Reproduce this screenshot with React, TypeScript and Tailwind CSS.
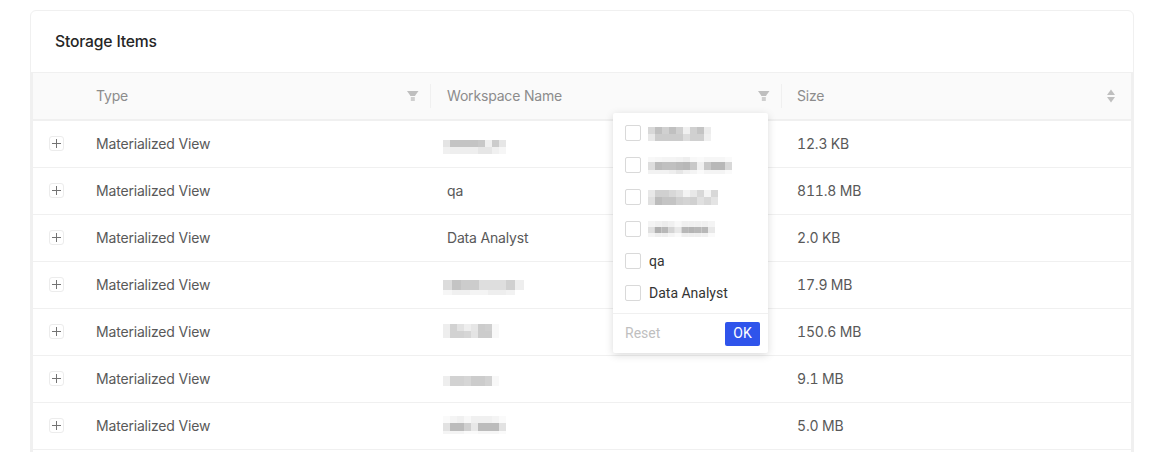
type Band = { y: number; h: number; cells: string[] };
type Blur = { cell: number; bands: Band[] };

const rows: { size: string; ws?: string; blur?: Blur }[] = [
  {
    size: "12.3 KB",
    blur: {
      cell: 7,
      bands: [
        { y: 6, h: 7, cells: ["#e4e4e4", "#c4c4c4", "#c4c4c4", "#c4c4c4", "#c4c4c4", "#c8c8c8", "#f0f0f0", "#cccccc", "#e6e6e6"] },
        { y: 13, h: 7, cells: ["#f0f0f0", "#eeeeee", "#eeeeee", "#eeeeee", "#eeeeee", "#e6e6e6", "#e6e6e6", "#f0f0f0", "#f6f6f6"] },
      ],
    },
  },
  { size: "811.8 MB", ws: "qa" },
  { size: "2.0 KB", ws: "Data Analyst" },
  {
    size: "17.9 MB",
    blur: {
      cell: 9,
      bands: [
        { y: 5, h: 10, cells: ["#dcdcdc", "#c4c4c4", "#cccccc", "#cccccc", "#dedede", "#dedede", "#dedede", "#d0d0d0", "#eeeeee"] },
        { y: 15, h: 9, cells: ["#f6f6f6", "#f0f0f0", "#f0f0f0", "#f4f4f4", "#f4f4f4", "#eeeeee", "#eeeeee", "#f2f2f2", "#ffffff"] },
      ],
    },
  },
  {
    size: "150.6 MB",
    blur: {
      cell: 7,
      bands: [
        { y: 2, h: 7, cells: ["#eeeeee", "#d2d2d2", "#e2e2e2", "#eeeeee", "#e6e6e6", "#cccccc", "#cfcfcf", "#f8f8f8"] },
        { y: 9, h: 7, cells: ["#eeeeee", "#d2d2d2", "#d2d2d2", "#d6d6d6", "#e4e4e4", "#cccccc", "#cccccc", "#f8f8f8"] },
      ],
    },
  },
  {
    size: "9.1 MB",
    blur: {
      cell: 7,
      bands: [{ y: 7, h: 10, cells: ["#eeeeee", "#d2d2d2", "#d2d2d2", "#d6d6d6", "#cccccc", "#cccccc", "#d2d2d2", "#f8f8f8"] }],
    },
  },
  {
    size: "5.0 MB",
    blur: {
      cell: 7,
      bands: [
        { y: 0, h: 7, cells: ["#fafafa", "#f4f4f4", "#f0f0f0", "#f8f8f8", "#f0f0f0", "#f0f0f0", "#f0f0f0", "#f4f4f4", "#fafafa"] },
        { y: 7, h: 8, cells: ["#e2e2e2", "#bcbcbc", "#bcbcbc", "#d0d0d0", "#e8e8e8", "#bcbcbc", "#bcbcbc", "#bcbcbc", "#e2e2e2"] },
        { y: 15, h: 3, cells: ["#f4f4f4", "#f4f4f4", "#f4f4f4", "#fafafa", "#fafafa", "#f6f6f6", "#f6f6f6", "#f6f6f6", "#fafafa"] },
      ],
    },
  },
];

const menu: (Blur | string)[] = [
  {
    cell: 7,
    bands: [
      { y: 4, h: 7, cells: ["#d8d8d8", "#c0c0c0", "#d0d0d0", "#c0c0c0", "#d0d0d0", "#f0f0f0", "#d0d0d0", "#c4c4c4", "#ececec"] },
      { y: 11, h: 7, cells: ["#e8e8e8", "#cccccc", "#cccccc", "#cccccc", "#cccccc", "#dddddd", "#d0d0d0", "#d0d0d0", "#f0f0f0"] },
    ],
  },
  {
    cell: 7,
    bands: [
      { y: 2, h: 5, cells: ["#f8f8f8", "#f6f6f6", "#f4f4f4", "#f4f4f4", "#f2f2f2", "#eeeeee", "#f8f8f8", "#fafafa", "#f6f6f6", "#f6f6f6", "#f6f6f6", "#fafafa"] },
      { y: 7, h: 8, cells: ["#dddddd", "#bbbbbb", "#c0c0c0", "#c0c0c0", "#bbbbbb", "#b8b8b8", "#c8c8c8", "#f0f0f0", "#c8c8c8", "#b8b8b8", "#b8b8b8", "#d8d8d8"] },
      { y: 15, h: 4, cells: ["#f2f2f2", "#f2f2f2", "#f2f2f2", "#eeeeee", "#e6e6e6", "#f0f0f0", "#f4f4f4", "#fafafa", "#f4f4f4", "#f4f4f4", "#f4f4f4", "#fafafa"] },
    ],
  },
  {
    cell: 7,
    bands: [
      { y: 3, h: 7, cells: ["#e8e8e8", "#d0d0d0", "#d0d0d0", "#d8d8d8", "#e0e0e0", "#f4f4f4", "#e8e8e8", "#d8d8d8", "#f4f4f4", "#d8d8d8"] },
      { y: 10, h: 8, cells: ["#e0e0e0", "#bcbcbc", "#c4c4c4", "#c4c4c4", "#d0d0d0", "#d4d4d4", "#d0d0d0", "#e0e0e0", "#d8d8d8", "#e4e4e4"] },
    ],
  },
  {
    cell: 6.7,
    bands: [
      { y: 2, h: 6, cells: ["#f4f4f4", "#f0f0f0", "#ececec", "#f0f0f0", "#f8f8f8", "#f0f0f0", "#f0f0f0", "#f0f0f0", "#f0f0f0", "#f4f4f4"] },
      { y: 8, h: 6, cells: ["#e0e0e0", "#b0b0b0", "#b8b8b8", "#d4d4d4", "#e8e8e8", "#b8b8b8", "#b4b4b4", "#b8b8b8", "#b8b8b8", "#e8e8e8"] },
      { y: 14, h: 4, cells: ["#f4f4f4", "#eeeeee", "#eeeeee", "#f4f4f4", "#fafafa", "#eeeeee", "#eeeeee", "#eeeeee", "#f0f0f0", "#fafafa"] },
    ],
  },
  "qa",
  "Data Analyst",
];

function Mosaic({ blur }: { blur: Blur }) {
  const width = Math.max(...blur.bands.map((b) => b.cells.length)) * blur.cell;
  return (
    <svg width={width} height={20} className="block blur-[0.5px]">
      {blur.bands.map((b, r) =>
        b.cells.map((c, i) => <rect key={`${r}-${i}`} x={i * blur.cell} y={b.y} width={blur.cell} height={b.h} fill={c} />)
      )}
    </svg>
  );
}

function FilterIcon() {
  return (
    <svg width="12" height="12" viewBox="0 0 12 12" className="block">
      <path d="M0 1h11.5L8.2 5.5v0.5h-5v-0.5z" fill="#bfbfbf" />
      <rect x="3.8" y="7" width="4" height="4" fill="#cfcfcf" />
    </svg>
  );
}

function SortIcon() {
  return (
    <svg width="10" height="14" viewBox="0 0 10 14" className="block">
      <path d="M5 0.5 9 6H1z" fill="#bfbfbf" />
      <path d="M1 8h8l-4 5.5z" fill="#bfbfbf" />
    </svg>
  );
}

export default function App() {
  return (
    <div className="h-[452px] overflow-hidden bg-white pl-[30px] pr-[32px] pt-[10px] font-['Inter',sans-serif] text-[14px] tracking-[-0.18px] text-[#595959]">
      <div className="relative flex h-[470px] flex-col rounded-[6px] border border-[#f0f0f0] bg-white">
        <div className="flex h-[61px] items-center pl-[24px] pt-[1px] text-[15.7px] font-medium text-[#262626]">Storage Items</div>
        <div className="flex-1 border-x-2 border-t border-[#f0f0f0] border-t-[#f0f0f0]">
          <div className="flex h-[48px] items-center border-b-2 border-[#f0f0f0] bg-[#fafafa] pb-[1px] text-[#8c8c8c]">
            <div className="w-[47px]" />
            <div className="flex w-[350px] items-center justify-between pl-[16px] pr-[11px]">
              <span>Type</span>
              <FilterIcon />
            </div>
            <div className="h-[24px] w-px bg-[#f0f0f0]" />
            <div className="flex w-[350px] items-center justify-between pl-[16px] pr-[11px]">
              <span>Workspace Name</span>
              <FilterIcon />
            </div>
            <div className="h-[24px] w-px bg-[#f0f0f0]" />
            <div className="flex flex-1 items-center justify-between pl-[15px] pr-[15px]">
              <span>Size</span>
              <SortIcon />
            </div>
          </div>
          {rows.map((r, i) => (
            <div key={i} className="flex h-[47px] items-center border-b border-[#f0f0f0] pb-[1px]">
              <div className="flex w-[47px] items-center pl-[16px]">
                <div className="relative h-[15px] w-[15px] rounded-[3px] border border-[#ececec] bg-white">
                  <div className="absolute left-[2px] top-[6px] h-px w-[9px] bg-[#737373]" />
                  <div className="absolute left-[6px] top-[2px] h-[9px] w-px bg-[#737373]" />
                </div>
              </div>
              <div className="w-[350px] pl-[16px]">Materialized View</div>
              <div className="w-[352px] pl-[17px]">
                {r.blur ? (
                  <div className="-ml-[4px]">
                    <Mosaic blur={r.blur} />
                  </div>
                ) : (
                  r.ws
                )}
              </div>
              <div className="flex-1 pl-[15px] tabular-nums">{r.size}</div>
            </div>
          ))}
        </div>
        <div className="absolute left-[582px] top-[102px] w-[155px] rounded-[2px] bg-white font-['Roboto',sans-serif] tracking-normal text-[#333333] shadow-[0_2px_8px_rgba(0,0,0,0.15)]">
          <div className="pt-[4px]">
            {menu.map((m, i) => (
              <div key={i} className="flex h-[32px] items-center pl-[12px]">
                <div className="h-[16px] w-[16px] rounded-[2px] border border-[#d9d9d9] bg-white" />
                <div className="pl-[8px]">
                  {typeof m === "string" ? m : <div className="-ml-px"><Mosaic blur={m} /></div>}
                </div>
              </div>
            ))}
          </div>
          <div className="mt-[4px] flex h-[40px] items-center justify-between border-t border-[#f0f0f0] pl-[12px] pr-[8px]">
            <span className="text-[#bfbfbf]">Reset</span>
            <span className="flex h-[24px] w-[35px] items-center justify-center rounded-[2px] bg-[#2f54eb] text-white">OK</span>
          </div>
        </div>
      </div>
    </div>
  );
}
